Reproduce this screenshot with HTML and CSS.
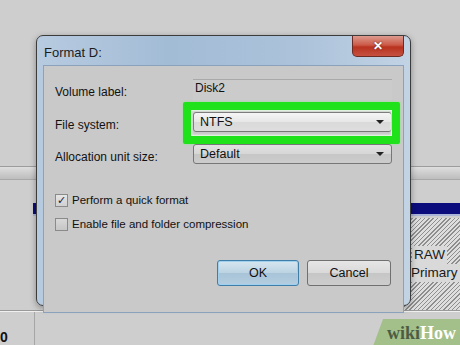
FILE: index.html
```html
<!DOCTYPE html>
<html lang="en">
<head>
  <meta charset="UTF-8" />
  <title>Format D:</title>
  <link rel="stylesheet" href="styles.css">
</head>
<body>
  <div class="desk">
    <div class="top-area"></div>
    <div class="header-band"></div>
    <div class="gap"></div>
    <div class="sel-bar"></div>
    <div class="parts">
      <div class="part part-a"></div>
      <div class="part part-b"></div>
      <div class="part part-raw">
        <span class="tag">RAW</span>
        <span class="tag">Primary</span>
      </div>
    </div>
    <div class="bottom">
      <div class="disk-cell">0</div>
      <div class="disk-rest"></div>
    </div>
  </div>

  <div class="dialog">
    <div class="titlebar">
      <span class="title">Format D:</span>
      <button class="close">&#x2715;</button>
    </div>
    <div class="client">
      <div class="form">
        <label class="lbl">Volume label:</label>
        <div class="textbox">Disk2</div>

        <label class="lbl">File system:</label>
        <div class="combo combo-hl">NTFS<span class="arrow"></span><span class="highlight"></span></div>

        <label class="lbl">Allocation unit size:</label>
        <div class="combo combo-dim">Default<span class="arrow"></span></div>
      </div>

      <div class="checks">
        <div class="check"><span class="box on">&#x2713;</span>Perform a quick format</div>
        <div class="check"><span class="box"></span>Enable file and folder compression</div>
      </div>

      <div class="buttons">
        <button class="btn btn-ok">OK</button>
        <button class="btn">Cancel</button>
      </div>
    </div>
  </div>

  <div class="wh"><span class="wh-wiki">wiki</span><span class="wh-how">How</span></div>
</body>
</html>
```

FILE: styles.css
```css
body { margin: 0; width: 460px; height: 345px; overflow: hidden; background: #cecece; font-family: "Liberation Sans", Arial, sans-serif; position: relative; }

/* background app (disk management) */
.desk { display: flex; flex-direction: column; height: 345px; }
.top-area { height: 168px; }
.header-band { height: 12px; border-top: 1px solid #9c9c9c; border-bottom: 1px solid #a8a8a8; background: linear-gradient(#dedede, #cacaca 60%, #bdbdbd); }
.gap { height: 23px; }
.sel-bar { height: 11px; margin-left: 33px; background: #0c0c7c; border-bottom: 2px solid #aab4d8; }
.parts { display: flex; height: 93px; margin-top: 2px; border-bottom: 1px solid #9a9a9a; }
.part-a { width: 126px; border-right: 1px solid #8c8c8c; }
.part-b { width: 230px; border-right: 1px solid #777; }
.part-raw { flex: 1; display: flex; flex-direction: column; align-items: flex-start; padding: 28px 0 0 54px;
  background: repeating-linear-gradient(135deg, #dedede 0 2px, #8e8e8e 2px 3px); }
.tag { background: #d9d9d9; font-size: 13.5px; line-height: 18px; color: #1a1a1a; padding: 0 2px; }
.tag + .tag { margin-left: -3px; }
.bottom { flex: 1; display: flex; border-top: 1px solid #f0f0f0; }
.disk-cell { width: 34px; border-right: 1px solid #a6a6a6; font-size: 14px; font-weight: bold; color: #111; padding-top: 17px; }
.disk-rest { flex: 1; }

/* dialog window */
.dialog { position: absolute; left: 36px; top: 35px; width: 361px; height: 269px; padding: 0 6px 0 6px;
  border: 1px solid #3c3c3c; border-radius: 7px;
  background: linear-gradient(90deg, #b7cbe0, #a3bcd6 35%, #abc2da 70%, #c2d3e4);
  box-shadow: 0 2px 6px rgba(0, 0, 0, 0.35); }
.titlebar { height: 29px; display: flex; align-items: flex-start; }
.title { padding: 9px 0 0 1px; font-size: 13px; line-height: 15px; color: #1c1c1c; }
.close { margin-left: auto; width: 52px; height: 21px; padding: 0; border: 1px solid #6b2a22; border-top: none; border-radius: 0 0 5px 5px;
  background: linear-gradient(#dd9a8e, #cc5a48 45%, #b8321f 55%, #c65040); color: #fff; font-size: 12px; font-weight: bold; line-height: 20px;
  text-shadow: 0 0 2px #5a1a10; }

.client { height: 233px; border: 1px solid #8aa2bb; background: #c9c9c9; padding: 13px 11px 0 11px; }
.form { display: grid; grid-template-columns: 138px 199px; grid-template-rows: 21px 20px 20px; row-gap: 12px; align-items: center; }
.lbl { font-size: 12px; color: #111; padding-top: 5px; }
.textbox { height: 21px; box-sizing: border-box; border-top: 1px solid #a9a9a9; padding: 1px 2px; font-size: 12px; color: #111; background: #cbcbcb; }
.combo { position: relative; height: 20px; box-sizing: border-box; border: 1px solid #777; border-radius: 3px; padding: 2px 6px 0 6px; font-size: 12.5px; color: #111; }
.combo-hl { background: linear-gradient(#f6f6f6, #e6e6e6 50%, #d9d9d9 51%, #dedede); }
.combo-dim { margin-top: -1px; background: linear-gradient(#e2e2e2, #d6d6d6 50%, #c6c6c6 51%, #cccccc); }
.arrow { position: absolute; right: 7px; top: 7px; width: 0; height: 0; border-left: 4px solid transparent; border-right: 4px solid transparent; border-top: 4px solid #222; }
.highlight { position: absolute; left: -11px; right: -9px; top: -11px; bottom: -13px; border: 8px solid #1fe21a; border-radius: 2px;
  box-shadow: inset 0 0 2px 1px #e8ffe8, 0 0 2px #7af07a; pointer-events: none; }

.checks { margin-top: 30px; display: flex; flex-direction: column; gap: 12px; }
.check { display: flex; align-items: center; gap: 4px; font-size: 11.5px; color: #111; height: 12px; }
.box { width: 11px; height: 11px; border: 1px solid #8a8a8a; background: linear-gradient(#d8d8d8, #c6c6c6); font-size: 11px; line-height: 11px; text-align: center; color: #202040; }
.box.on { background: linear-gradient(#e6e6e6, #d0d0d0); }

.buttons { display: flex; justify-content: flex-end; gap: 8px; margin-top: 30px; padding-right: 1px; }
.btn { width: 84px; height: 26px; border: 1px solid #707070; border-radius: 3px; font-family: "Liberation Sans", Arial, sans-serif; font-size: 12.5px; color: #111;
  background: linear-gradient(#e6e6e6, #d9d9d9 50%, #c6c6c6 51%, #cdcdcd); }
.btn-ok { width: 82px; border-color: #3e7ea8; background: linear-gradient(#d6e6f0, #bcd3e2 50%, #a8c4d8 51%, #b4cde0); box-shadow: inset 0 0 0 1px #9fd0ee; }

/* watermark */
.wh { position: absolute; left: 372px; top: 319px; width: 100px; height: 30px; background: #a3c08a; border-top-left-radius: 8px;
  clip-path: polygon(11px 0, 100% 0, 100% 100%, 0 100%); padding-left: 15px; box-sizing: border-box;
  font-family: "Liberation Serif", "Times New Roman", serif; font-weight: bold; font-size: 18px; line-height: 28px; }
.wh-wiki { color: #4c5c44; }
.wh-how { color: #ffffff; }
```
